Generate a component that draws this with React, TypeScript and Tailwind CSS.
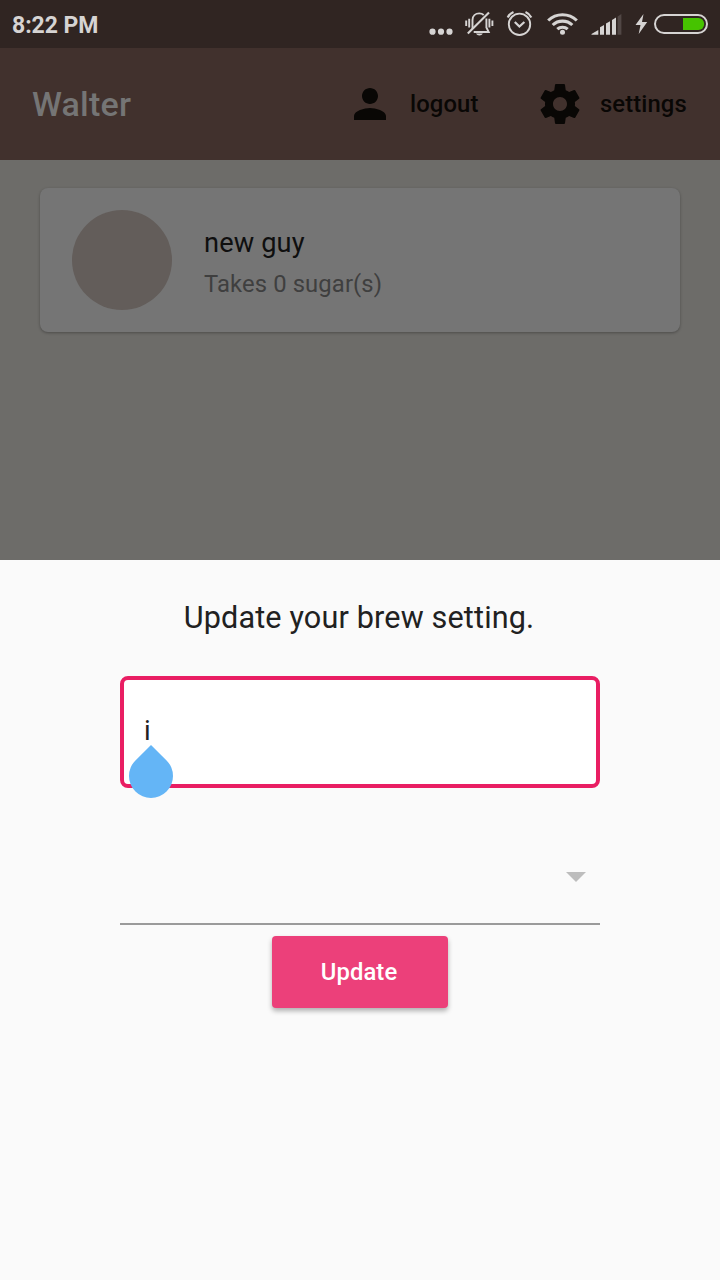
import React from "react";

function StatusIcons() {
  return (
    <svg width="300" height="48" viewBox="420 0 300 48" fill="none" stroke="#d6d4d3">
      <g fill="#d6d4d3" stroke="none">
        <circle cx="432.5" cy="31.7" r="3.1" />
        <circle cx="441" cy="31.7" r="3.1" />
        <circle cx="449.5" cy="31.7" r="3.1" />
      </g>
      <g strokeWidth="1.9">
        <path d="M472.500 29V20c0-4 3-6.600 6.800-6.600 1.700 0 3.200.5 4.400 1.500" />
        <path d="M486.400 18.500V27.500l2.300 4.500h-15" />
        <path d="M467.800 33.500 489 12.500" strokeWidth="2.100" />
        <path d="M466.200 20.500v5.500M469.200 18.800v8.800M489.400 18.800v8.800M492.400 20.500v5.500" />
      </g>
      <path d="M476 33.500h6.800c-.6 1.200-1.900 1.900-3.400 1.900s-2.800-.7-3.400-1.900z" fill="#d6d4d3" stroke="none" />
      <circle cx="519.500" cy="24.300" r="10.700" strokeWidth="1.900" />
      <path d="m514.800 22 4.600 4.600 5-4.600" strokeWidth="2.200" />
      <path d="M507.700 17.400q1.800-3.700 5.800-5.400M531.300 17.400q-1.800-3.700-5.800-5.400" strokeWidth="2.200" />
      <g strokeWidth="3.100">
        <path d="M548.200 20.500a20.500 20.500 0 0 1 28.600 0" />
        <path d="M552.700 25a14.200 14.200 0 0 1 19.600 0" />
        <path d="M557.300 29.200a7.700 7.700 0 0 1 10.400 0" />
      </g>
      <circle cx="562.500" cy="32.200" r="2.500" fill="#d6d4d3" stroke="none" />
      <g fill="#d6d4d3" stroke="none">
        <path d="M591.500 34.700v-.8l6.800-4v4.800z" />
        <path d="M600 34.700v-7.500l4-2.200v9.700z" />
        <path d="M606 34.700V23.600l4-2.300v13.400z" />
        <path d="M612 34.700V19.900l4-2.400v17.200z" />
        <path d="M617.600 34.700V16.400l3.800-2.300v20.600z" opacity=".2" />
        <path d="M643.500 14 635.500 25h5l-1.800 9 8.500-12h-5.200z" />
      </g>
      <rect x="655" y="15" width="52" height="18" rx="9" strokeWidth="2" />
      <path d="M683 18h15.500a5.700 6 0 0 1 0 12H683z" fill="#46c300" stroke="none" />
    </svg>
  );
}

function PersonIcon() {
  return (
    <svg width="48" height="48" viewBox="0 0 24 24" fill="#090705">
      <path d="M12 12c2.210 0 4-1.790 4-4s-1.790-4-4-4-4 1.790-4 4 1.790 4 4 4zm0 2c-2.670 0-8 1.340-8 4v2h16v-2c0-2.660-5.330-4-8-4z" />
    </svg>
  );
}

function SettingsIcon() {
  return (
    <svg width="48" height="48" viewBox="0 0 24 24" fill="#090705">
      <path d="M19.430 12.980c.04-.32.07-.64.07-.98s-.03-.66-.07-.98l2.110-1.650c.19-.15.24-.42.12-.64l-2-3.460c-.12-.22-.39-.3-.61-.22l-2.490 1c-.52-.4-1.080-.73-1.690-.98l-.38-2.650C14.460 2.180 14.250 2 14 2h-4c-.25 0-.46.18-.49.42l-.38 2.650c-.61.25-1.170.59-1.690.98l-2.490-1c-.23-.09-.49 0-.61.22l-2 3.460c-.13.22-.07.49.12.64l2.110 1.650c-.04.32-.07.65-.07.98s.03.66.07.98l-2.110 1.650c-.19.15-.24.42-.12.64l2 3.460c.12.22.39.3.61.22l2.490-1c.52.4 1.080.73 1.690.98l.38 2.650c.03.24.24.42.49.42h4c.25 0 .46-.18.49-.42l.38-2.650c.61-.25 1.170-.59 1.690-.98l2.490 1c.23.09.49 0 .61-.22l2-3.460c.12-.22.07-.49-.12-.64l-2.110-1.650zM12 15.500c-1.930 0-3.500-1.570-3.500-3.500s1.570-3.500 3.500-3.500 3.500 1.570 3.500 3.500-1.570 3.500-3.500 3.500z" />
    </svg>
  );
}

export default function App() {
  return (
    <div className="flex h-[1280px] w-[720px] flex-col overflow-hidden bg-[#6d6c69] font-['Roboto',sans-serif]">
      <div className="flex h-12 items-center justify-between bg-[#302522] pl-3">
        <span className="pt-[3px] text-[23px] font-bold leading-[34px] tracking-[-0.05px] text-[#d6d4d3]">8:22 PM</span>
        <StatusIcons />
      </div>

      <header className="flex h-28 items-center bg-[#41312d] pl-8">
        <h1 className="w-[314px] text-[34px] font-medium tracking-[0.2px] text-[#757575]">Walter</h1>
        <button className="flex w-[190px] items-center gap-4 text-[23.8px] font-medium tracking-[0.12px] text-[#090705]">
          <PersonIcon />
          <span className="pt-[2px]">logout</span>
        </button>
        <button className="flex items-center gap-4 text-[23.8px] font-medium tracking-[0.12px] text-[#090705]">
          <SettingsIcon />
          <span className="pt-[2px]">settings</span>
        </button>
      </header>

      <main className="h-[400px] px-10 pt-7">
        <div className="flex h-36 items-center gap-8 rounded-lg bg-[#757575] pl-8 shadow-[0_1px_3px_rgba(0,0,0,0.3)]">
          <div className="size-[100px] rounded-full bg-[#635d5a]" />
          <div className="flex flex-col pt-[6px]">
            <span className="text-[27.2px] leading-[42px] tracking-[0.15px] text-[#0f0f0f]">new guy</span>
            <span className="text-[23.8px] leading-10 tracking-[0.12px] text-[#3f3f3f]">Takes 0 sugar(s)</span>
          </div>
        </div>
      </main>

      <section className="flex flex-1 flex-col items-center bg-[#fafafa] px-[120px] pt-10">
        <h2 className="-ml-[2px] text-[30.6px] leading-9 tracking-[0.15px] text-[#212121]">Update your brew setting.</h2>
        <div className="relative mt-10 h-28 w-full rounded-lg border-4 border-[#e91e63] bg-white pl-5 pt-[35px]">
          <span className="block text-[27.2px] leading-8 text-[#212121]">i</span>
          <svg className="absolute left-[5px] top-[65px]" width="44" height="54" viewBox="0 0 44 54">
            <path d="M22 0 37.560 15.440A22 22 0 1 1 6.440 15.440Z" fill="#64b5f6" />
          </svg>
        </div>
        <div className="mt-10 flex h-[97px] w-full items-center justify-end border-b-2 border-[#9a9a9a] pr-[14px] pt-[2px]">
          <svg width="20" height="10" viewBox="0 0 20 10">
            <path d="M0 0h20L10 10z" fill="#bdbdbd" />
          </svg>
        </div>
        <button className="mt-[11px] h-[72px] w-44 rounded bg-[#ec407a] pr-[2px] pt-[2px] text-[23.8px] font-medium tracking-[0.12px] text-white shadow-[0_3px_5px_rgba(0,0,0,0.3)]">
          Update
        </button>
      </section>
    </div>
  );
}
